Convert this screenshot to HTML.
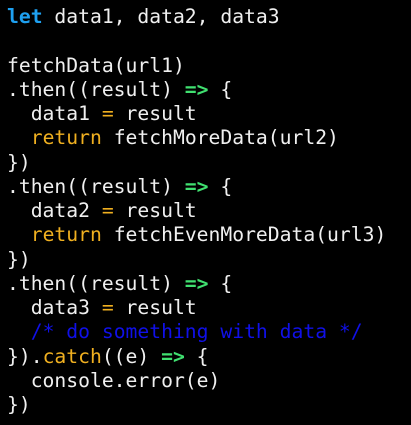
<!DOCTYPE html>
<html><head><style>
html,body{margin:0;background:#000;width:411px;height:425px;overflow:hidden}
pre{margin:0;padding:5px 0 0 7px;font-family:"DejaVu Sans Mono","Liberation Mono",monospace;font-size:19.7px;line-height:24.25px;color:#f0f0f0}
.k{color:#1ea0f0;font-weight:bold}.o{color:#f0b020}.a{color:#40e070;font-weight:bold}.c{color:#1010e8}
</style></head><body><pre><span class="k">let</span> data1, data2, data3

fetchData(url1)
.then((result) <span class="a">=&gt;</span> {
  data1 <span class="o">=</span> result
  <span class="o">return</span> fetchMoreData(url2)
})
.then((result) <span class="a">=&gt;</span> {
  data2 <span class="o">=</span> result
  <span class="o">return</span> fetchEvenMoreData(url3)
})
.then((result) <span class="a">=&gt;</span> {
  data3 <span class="o">=</span> result
  <span class="c">/* do something with data */</span>
}).<span class="o">catch</span>((e) <span class="a">=&gt;</span> {
  console.error(e)
})</pre></body></html>
